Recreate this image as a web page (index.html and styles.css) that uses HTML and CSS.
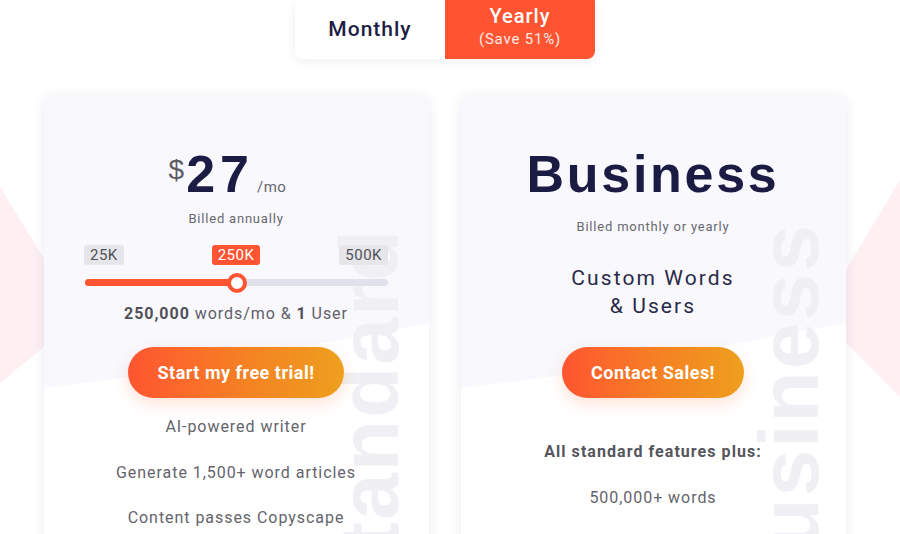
FILE: index.html
```html
<!DOCTYPE html>
<html lang="en">
<head>
<meta charset="utf-8">
<title>Pricing</title>
<link rel="stylesheet" href="styles.css">
</head>
<body>
<svg class="bg-shapes" width="900" height="534" viewBox="0 0 900 534" aria-hidden="true">
  <polygon points="0,187 80,317 0,383" fill="#fdeff2"/>
  <polygon points="900,180 819,315 900,397" fill="#fdeff2"/>
</svg>
<div class="page">
  <div class="toggle">
    <div class="opt monthly">Monthly</div>
    <div class="opt yearly"><span class="yl">Yearly</span><span class="save">(Save 51%)</span></div>
  </div>
  <div class="plans">
    <div class="card">
      <div class="watermark wm-left">Standard</div>
      <div class="content">
        <div class="price"><span class="cur">$</span><span class="amt">27</span><span class="per">/mo</span></div>
        <div class="billed">Billed annually</div>
        <div class="slider">
          <div class="chips">
            <span class="chip first">25K</span>
            <span class="chip active">250K</span>
            <span class="chip last">500K</span>
          </div>
          <div class="track">
            <div class="fill" style="width:50%"></div>
            <div class="thumb" style="left:50%"></div>
          </div>
        </div>
        <div class="words"><b>250,000</b> words/mo &amp; <b>1</b> User</div>
        <a class="btn">Start my free trial!</a>
        <ul class="features">
          <li>AI-powered writer</li>
          <li>Generate 1,500+ word articles</li>
          <li>Content passes Copyscape</li>
        </ul>
      </div>
    </div>
    <div class="card">
      <div class="watermark wm-right">Business</div>
      <div class="content">
        <div class="plan-name">Business</div>
        <div class="billed billed-biz">Billed monthly or yearly</div>
        <div class="custom">Custom Words<br>&amp; Users</div>
        <a class="btn btn-biz">Contact Sales!</a>
        <ul class="features features-biz">
          <li class="lead">All standard features plus:</li>
          <li>500,000+ words</li>
        </ul>
      </div>
    </div>
  </div>
</div>
</body>
</html>
```
FILE: styles.css
```css
html, body {
  margin: 0;
  padding: 0;
  overflow: hidden;
  background: #ffffff;
  font-family: Roboto, "Liberation Sans", Arial, sans-serif;
}

.bg-shapes {
  position: absolute;
  left: 0;
  top: 0;
  z-index: 0;
}

.page {
  position: relative;
  z-index: 1;
  width: 802px;
  margin-left: 44px;
  height: 534px;
}

/* Toggle */
.toggle {
  width: 300px;
  height: 59px;
  margin: 0 auto;
  display: flex;
  background: #fff;
  border-radius: 0 0 8px 8px;
  box-shadow: 0 2px 12px rgba(30, 30, 70, 0.07);
}

.opt {
  flex: 1;
  display: flex;
  flex-direction: column;
  align-items: center;
  justify-content: center;
}

.monthly {
  color: #1e1e44;
  font-size: 21px;
  font-weight: 500;
  letter-spacing: 1px;
  padding-bottom: 2px;
}

.yearly {
  background: #ff5431;
  color: #fff;
  border-radius: 0 0 8px 0;
}

.yl {
  font-size: 20px;
  font-weight: 500;
  letter-spacing: 1px;
  line-height: 24px;
  margin-top: -7px;
}

.save {
  font-size: 15px;
  letter-spacing: 0.8px;
  line-height: 18px;
  margin-top: 2px;
  color: #ffe9e3;
}

/* Plans */
.plans {
  display: flex;
  gap: 32px;
  margin-top: 36px;
}

.card {
  position: relative;
  width: 385px;
  height: 520px;
  background: #f8f8fd;
  border-radius: 8px;
  box-shadow: 0 2px 14px rgba(30, 30, 80, 0.08);
  overflow: hidden;
}

.card::before {
  content: "";
  position: absolute;
  inset: 0;
  background: #ffffff;
  clip-path: polygon(0 293px, 25% 281px, 50% 264px, 75% 246px, 100% 228px, 100% 100%, 0 100%);
}

.watermark {
  position: absolute;
  writing-mode: vertical-rl;
  transform: rotate(180deg);
  font-family: "Liberation Sans", Arial, sans-serif;
  font-weight: 700;
  font-size: 84px;
  line-height: 1;
  letter-spacing: 2px;
  color: #f0f0f4;
  white-space: nowrap;
}

.wm-left {
  top: 133px;
  right: 18px;
}

.wm-right {
  top: 128px;
  right: 15px;
}

.content {
  position: relative;
  display: flex;
  flex-direction: column;
  align-items: center;
  padding: 53px 41px 0 40px;
}

.price {
  display: flex;
  align-items: baseline;
  padding-right: 17px;
}

.cur {
  align-self: flex-start;
  margin-top: 8px;
  font-family: "Liberation Sans", Arial, sans-serif;
  font-size: 28px;
  line-height: 1;
  color: #5c5c66;
  margin-right: 2px;
}

.amt {
  font-family: "Liberation Sans", Arial, sans-serif;
  font-weight: 700;
  font-size: 52px;
  line-height: 52px;
  letter-spacing: 5px;
  color: #1c1b44;
}

.per {
  font-size: 15px;
  color: #666670;
  letter-spacing: 0.5px;
  margin-left: 3px;
}

.billed {
  margin-top: 10px;
  font-size: 13px;
  line-height: 18px;
  letter-spacing: 0.8px;
  color: #68686f;
}

.slider {
  width: 100%;
  margin-top: 17px;
}

.chips {
  display: grid;
  grid-template-columns: 1fr auto 1fr;
  align-items: center;
}

.chip {
  height: 20px;
  line-height: 20px;
  padding: 0 6px;
  border-radius: 3px;
  background: #e6e6ea;
  color: #505058;
  font-size: 15px;
  letter-spacing: 0.5px;
}

.chip.first {
  justify-self: start;
}

.chip.last {
  justify-self: end;
}

.chip.active {
  background: #ff5431;
  color: #fff;
}

.track {
  position: relative;
  height: 7px;
  margin-top: 14px;
  margin-left: 1px;
  border-radius: 4px;
  background: #dfe2ea;
}

.fill {
  height: 100%;
  border-radius: 4px;
  background: #ff5431;
}

.thumb {
  position: absolute;
  top: 50%;
  width: 12px;
  height: 12px;
  border: 4px solid #ff5431;
  border-radius: 50%;
  background: #fff;
  transform: translate(-50%, -50%);
}

.words {
  margin-top: 18px;
  font-size: 16px;
  line-height: 20px;
  letter-spacing: 0.95px;
  color: #606068;
}

.words b {
  font-weight: 700;
  color: #505058;
}

.btn {
  display: flex;
  align-items: center;
  justify-content: center;
  height: 51px;
  padding: 0 29px;
  margin-top: 23px;
  border-radius: 26px;
  background: linear-gradient(90deg, #ff5530 0%, #f58223 55%, #ee9f1e 100%);
  color: #fff;
  font-size: 18px;
  font-weight: 700;
  letter-spacing: 0.5px;
  box-shadow: 0 6px 16px rgba(255, 100, 40, 0.18);
  cursor: pointer;
}

.features {
  list-style: none;
  margin: 6px 0 0;
  padding: 0;
  text-align: center;
}

.features li {
  font-size: 16px;
  line-height: 45.5px;
  letter-spacing: 0.95px;
  color: #64646c;
  white-space: nowrap;
}

/* Business card */
.plan-name {
  font-family: "Liberation Sans", Arial, sans-serif;
  font-weight: 700;
  font-size: 52px;
  line-height: 52px;
  letter-spacing: 2.7px;
  color: #1c1b44;
}

.billed-biz {
  margin-top: 18px;
}

.custom {
  margin-top: 28px;
  text-align: center;
  font-size: 21px;
  line-height: 28px;
  letter-spacing: 2.1px;
  color: #2a2a48;
}

.btn-biz {
  margin-top: 27px;
}

.features-biz {
  margin-top: 31px;
}

.features-biz li {
  line-height: 46px;
}

.features-biz li.lead {
  font-weight: 700;
  color: #55555c;
  letter-spacing: 1.05px;
}
```
